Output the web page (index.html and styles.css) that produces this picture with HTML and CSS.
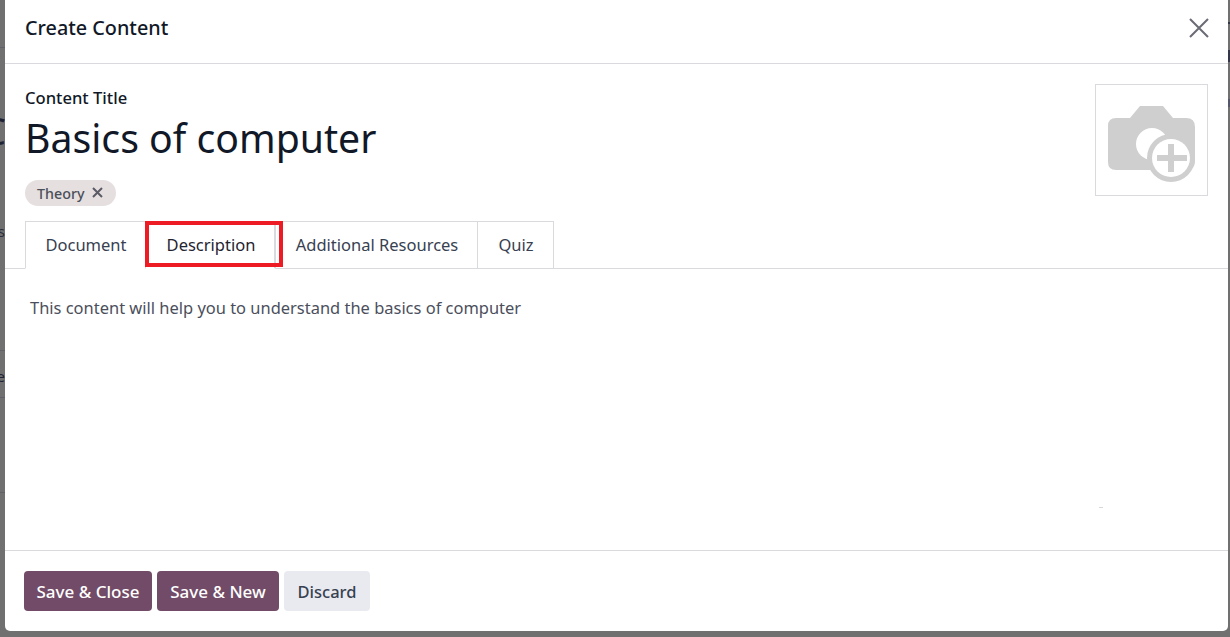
FILE: index.html
```html
<!DOCTYPE html>
<html lang="en">
<head>
<meta charset="utf-8">
<title>Create Content</title>
<link rel="stylesheet" href="styles.css">
</head>
<body>
<div class="backdrop">
  <span class="bg-rule bg-rule-a"></span>
  <span class="bg-rule bg-rule-b"></span>
  <span class="bg-rule bg-rule-c"></span>
  <span class="bg-rule bg-rule-d"></span>
  <span class="bg-mark bg-mark-a"></span>
  <span class="bg-mark bg-mark-b"></span>
  <span class="bg-mark bg-mark-c"></span>
  <span class="bg-text bg-text-c">C</span>
  <span class="bg-text bg-text-n">ns</span>
  <span class="bg-text bg-text-e">e</span>
  <div class="modal">
    <header class="modal-header">
      <h4 class="modal-title">Create Content</h4>
      <svg class="close" width="20" height="20" viewBox="0 0 20 20" aria-label="Close"><path d="M1 1 L19 19 M19 1 L1 19" stroke="#6b6b76" stroke-width="2" fill="none"/></svg>
    </header>
    <main class="modal-body">
      <div class="sheet-top">
        <div class="title-block">
          <label class="field-label">Content Title</label>
          <div class="title-value">Basics of computer</div>
          <div class="tags"><span class="tag">Theory <svg class="tag-x" width="11" height="11" viewBox="0 0 11 11"><path d="M1 1 L10 10 M10 1 L1 10" stroke="#5b5b66" stroke-width="2" fill="none"/></svg></span></div>
        </div>
        <div class="image-box">
          <svg class="camera" width="88" height="78" viewBox="0 0 88 78">
            <path fill="#cfcfcf" d="M8 13 H22 L32 1 H55 L65 13 H78 Q87 13 87 22 V56 Q87 65 78 65 H8 Q0 65 0 57 V21 Q0 13 8 13 Z"/>
            <circle cx="44" cy="39" r="16" fill="#fff"/>
            <circle cx="63" cy="53" r="24" fill="#cfcfcf"/>
            <circle cx="63" cy="53" r="19" fill="#fff"/>
            <path d="M63 39 V67 M49 53 H79" stroke="#cfcfcf" stroke-width="6" fill="none"/>
          </svg>
        </div>
      </div>
      <nav class="tabs">
        <a class="tab tab-document">Document</a>
        <a class="tab tab-description is-active">Description<span class="highlight"></span></a>
        <a class="tab tab-resources">Additional Resources</a>
        <a class="tab tab-quiz">Quiz</a>
      </nav>
      <p class="description">This content will help you to understand the basics of computer</p>
    </main>
    <footer class="modal-footer">
      <button class="btn btn-primary btn-close">Save &amp; Close</button>
      <button class="btn btn-primary btn-new">Save &amp; New</button>
      <button class="btn btn-secondary">Discard</button>
    </footer>
    <span class="speck"></span>
  </div>
</div>
</body>
</html>
```

FILE: styles.css
```css
* { box-sizing: border-box; }
html, body { margin: 0; height: 100%; overflow: hidden; }
body { font-family: "Noto Sans", "Open Sans", sans-serif; color: #111827; }
.backdrop { position: relative; width: 1230px; height: 637px; background: #707070; padding-left: 5px; overflow: hidden; }
.bg-rule { position: absolute; left: 0; width: 5px; height: 1px; background: #5f6068; }
.bg-rule-a { top: 47px; }
.bg-rule-b { top: 350px; }
.bg-rule-c { top: 397px; }
.bg-rule-d { top: 492px; }
.bg-mark { position: absolute; left: 1228px; width: 2px; background: #34364a; }
.bg-mark-a { top: 22px; height: 2px; }
.bg-mark-b { top: 50px; height: 12px; }
.bg-mark-c { top: 99px; height: 8px; background: #55566a; }
.bg-text { position: absolute; color: #1f2233; }
.bg-text-c { right: 1224px; top: 108px; font-size: 38px; line-height: 44px; }
.bg-text-n { right: 1225px; top: 221px; font-size: 15px; line-height: 20px; color: #2b2d3a; }
.bg-text-e { right: 1225px; top: 366px; font-size: 15px; line-height: 20px; }
.modal { position: relative; width: 1223px; height: 631px; background: #fff; border-radius: 0 0 5px 5px; display: flex; flex-direction: column; }
.modal-header { height: 64px; flex: none; border-bottom: 1px solid #d8dadd; padding: 0 19px 0 20px; display: flex; align-items: center; justify-content: space-between; }
.modal-title { margin: 0 0 7px; font-size: 19.8px; line-height: 26px; font-weight: 500; color: #111827; }
.close { display: block; margin-bottom: 7px; }
.modal-body { flex: 1; min-height: 0; padding-top: 20px; }
.sheet-top { display: flex; justify-content: space-between; padding: 0 20px; height: 137px; }
.field-label { display: block; margin-top: 3px; font-size: 16.6px; line-height: 22px; font-weight: 500; color: #111827; }
.title-value { font-size: 39.2px; line-height: 54px; color: #111827; margin-top: 2px; }
.tags { margin-top: 15px; }
.tag { display: inline-flex; align-items: center; gap: 7px; height: 26px; padding: 0 13px 0 12px; border-radius: 13px; background: #e6dfdf; font-size: 14.3px; font-weight: 500; color: #4a4f5a; }
.tag-x { display: block; margin-top: -2px; }
.image-box { width: 113px; height: 112px; border: 1px solid #d8dadd; display: flex; align-items: center; justify-content: center; }
.camera { display: block; margin-top: 7px; }
.tabs { display: flex; height: 48px; padding-left: 20px; border-bottom: 1px solid #d8dadd; }
.tab { position: relative; display: flex; align-items: center; justify-content: center; height: 48px; border: 1px solid #d8dadd; border-left: 0; font-size: 16.5px; color: #374151; padding-bottom: 1px; padding-left: 1px; }
.tab-document { width: 121px; border-left: 1px solid #d8dadd; border-bottom-color: #fff; }
.tab-description { width: 130px; padding-left: 2px; color: #1f2430; border-bottom-color: #fff; border-right-width: 2px; }
.tab-resources { width: 202px; }
.tab-quiz { width: 76px; }
.highlight { position: absolute; left: -1px; top: -1px; width: 138px; height: 46px; border: 4px solid #ed1c24; z-index: 1; }
.description { margin: 27px 0 0 25px; font-size: 16.47px; line-height: 24px; color: #4b4f5c; }
.modal-footer { height: 81px; flex: none; border-top: 1px solid #d8dadd; padding: 20px 19px 0; display: flex; gap: 5px; align-items: flex-start; }
.btn { height: 40px; border: 0; border-radius: 4px; font-family: inherit; font-size: 16.5px; font-weight: 500; padding: 0; }
.btn-primary { background: #714b67; color: #fff; font-size: 17px; }
.btn-close { width: 128px; }
.btn-new { width: 122px; }
.btn-secondary { width: 86px; background: #e9eaf0; color: #374151; }
.speck { position: absolute; left: 1094px; top: 507px; width: 4px; height: 1px; background: #d8d8d8; }
```
